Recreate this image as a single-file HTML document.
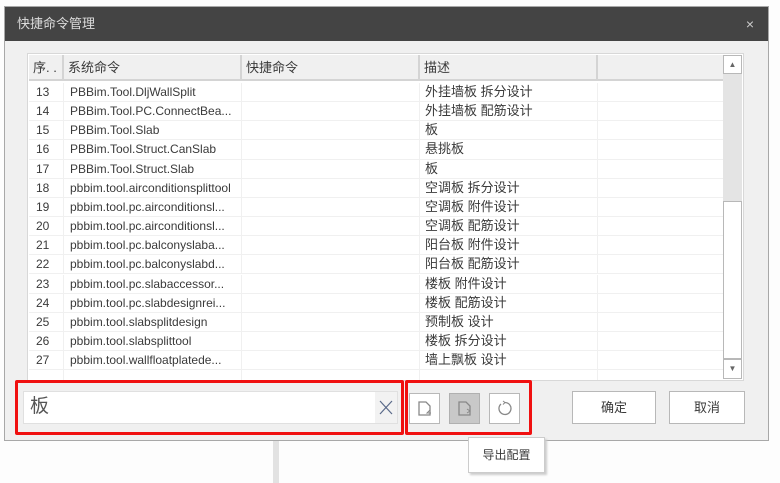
<!DOCTYPE html>
<html><head><meta charset="utf-8"><style>
*{box-sizing:border-box;margin:0;padding:0}
body{width:780px;height:483px;background:#fdfdfd;position:relative;overflow:hidden;font-family:"Liberation Sans","Noto Sans CJK SC",sans-serif;font-size:12px;color:#3a3a3a}
.a{position:absolute}
#dlg{left:4px;top:6px;width:765px;height:435px;background:#f0f0f0;border:1px solid #a8a8a8}
#title{left:0;top:0;width:763px;height:34px;background:#444;color:#dcdcdc;font-size:13px;line-height:34px;padding-left:12px}
#grid{left:22px;top:46px;width:717px;height:328px;border:1px solid #d8d8d8;background:#fff;overflow:hidden}
.hd{top:1px;height:26px;background:#f0f0f0;border-right:2px solid #d4d4d4;border-bottom:2px solid #d4d4d4;line-height:25px;padding-left:4px;font-size:13px}
.row{left:0;width:694px;height:19.15px;border-bottom:1px solid #f0f0f0;line-height:18px}
.c{position:absolute;top:0;height:100%;border-right:1px solid #f0f0f0;white-space:nowrap;overflow:hidden}
.btn{background:#fff;border:1px solid #b8b8b8}
.red{border:3px solid #f01010;border-radius:2px}
</style></head><body>
<div class="a" style="left:273px;top:440px;width:6px;height:43px;background:#e2e2e2"></div>
<div id="dlg" class="a">
<div id="title" class="a">快捷命令管理<span class="a" style="right:14px;top:0;font-size:14px;color:#ccc">×</span></div>
<div id="grid" class="a">
 <div class="a hd" style="left:1px;width:35px">序. .</div>
 <div class="a hd" style="left:36px;width:178px">系统命令</div>
 <div class="a hd" style="left:214px;width:178px">快捷命令</div>
 <div class="a hd" style="left:392px;width:178px">描述</div>
 <div class="a hd" style="left:570px;width:125px;border-right:none"></div>
 <div id="rows" class="a" style="left:1px;top:29px"></div>
 <div class="a btn" style="left:695px;top:1px;width:19px;height:19px;font-size:8px;text-align:center;line-height:17px;color:#666">▲</div>
 <div class="a" style="left:695px;top:20px;width:19px;height:127px;background:#e4e4e4"></div>
 <div class="a btn" style="left:695px;top:147px;width:19px;height:158px"></div>
 <div class="a btn" style="left:695px;top:305px;width:19px;height:20px;font-size:8px;text-align:center;line-height:18px;color:#666">▼</div>
</div>
<div class="a red" style="left:10px;top:373px;width:389px;height:55px"></div>
<div class="a" style="left:18px;top:384px;width:375px;height:33px;background:#fff;border:1px solid #e0e0e0;font-size:19px;color:#555;line-height:30px;padding-left:6px">板<span class="a" style="right:0;top:0;width:22px;height:31px;background:#f2f2f2"><svg width="22" height="31" viewBox="0 0 22 31"><path d="M5 9l12 13M17 9L5 22" stroke="#5a6a8a" stroke-width="1.2" fill="none"/></svg></span></div>
<div class="a red" style="left:400px;top:373px;width:127px;height:55px"></div>
<div class="a btn" style="left:404px;top:386px;width:31px;height:31px"><svg width="29" height="29" viewBox="0 0 29 29"><path d="M9 8h7l4 4v9H9z" fill="none" stroke="#888" stroke-width="1.3"/><path d="M20 16l-3 3h4" fill="none" stroke="#888"/></svg></div>
<div class="a" style="left:444px;top:386px;width:31px;height:31px;background:#c8c8c8;border:1px solid #b0b0b0"><svg width="29" height="29" viewBox="0 0 29 29"><path d="M9 8h7l4 4v9H9z" fill="none" stroke="#888" stroke-width="1.3"/><path d="M17 15l3 2l-3 2" fill="none" stroke="#888"/></svg></div>
<div class="a btn" style="left:484px;top:386px;width:31px;height:31px"><svg width="29" height="29" viewBox="0 0 29 29"><path d="M11 10a6 6 0 1 0 4-1.5" fill="none" stroke="#888" stroke-width="1.3"/><path d="M13 7l2 1.5l-2 2" fill="none" stroke="#888"/></svg></div>
<div class="a btn" style="left:567px;top:384px;width:84px;height:33px;text-align:center;line-height:31px;font-size:13px">确定</div>
<div class="a btn" style="left:664px;top:384px;width:76px;height:33px;text-align:center;line-height:31px;font-size:13px">取消</div>
</div>
<div class="a" style="left:468px;top:437px;width:77px;height:36px;background:#fff;border:1px solid #ccc;box-shadow:2px 2px 2px #ccc;text-align:center;line-height:34px;font-size:12px">导出配置</div>
<script>
var d=[["13","PBBim.Tool.DljWallSplit","外挂墙板 拆分设计"],["14","PBBim.Tool.PC.ConnectBea...","外挂墙板 配筋设计"],["15","PBBim.Tool.Slab","板"],["16","PBBim.Tool.Struct.CanSlab","悬挑板"],["17","PBBim.Tool.Struct.Slab","板"],["18","pbbim.tool.airconditionsplittool","空调板 拆分设计"],["19","pbbim.tool.pc.airconditionsl...","空调板 附件设计"],["20","pbbim.tool.pc.airconditionsl...","空调板 配筋设计"],["21","pbbim.tool.pc.balconyslaba...","阳台板 附件设计"],["22","pbbim.tool.pc.balconyslabd...","阳台板 配筋设计"],["23","pbbim.tool.pc.slabaccessor...","楼板 附件设计"],["24","pbbim.tool.pc.slabdesignrei...","楼板 配筋设计"],["25","pbbim.tool.slabsplitdesign","预制板 设计"],["26","pbbim.tool.slabsplittool","楼板 拆分设计"],["27","pbbim.tool.wallfloatplatede...","墙上飘板 设计"],["","",""]];
var h="";d.forEach(function(r,i){h+='<div class="a row" style="top:'+(i*19.15)+'px"><div class="c" style="left:0;width:35px;padding-left:7px">'+r[0]+'</div><div class="c" style="left:35px;width:178px;padding-left:6px">'+r[1]+'</div><div class="c" style="left:213px;width:178px"></div><div class="c" style="left:391px;width:178px;padding-left:5px;font-size:13px">'+r[2]+'</div></div>'});
document.getElementById("rows").innerHTML=h;
</script>
</body></html>
